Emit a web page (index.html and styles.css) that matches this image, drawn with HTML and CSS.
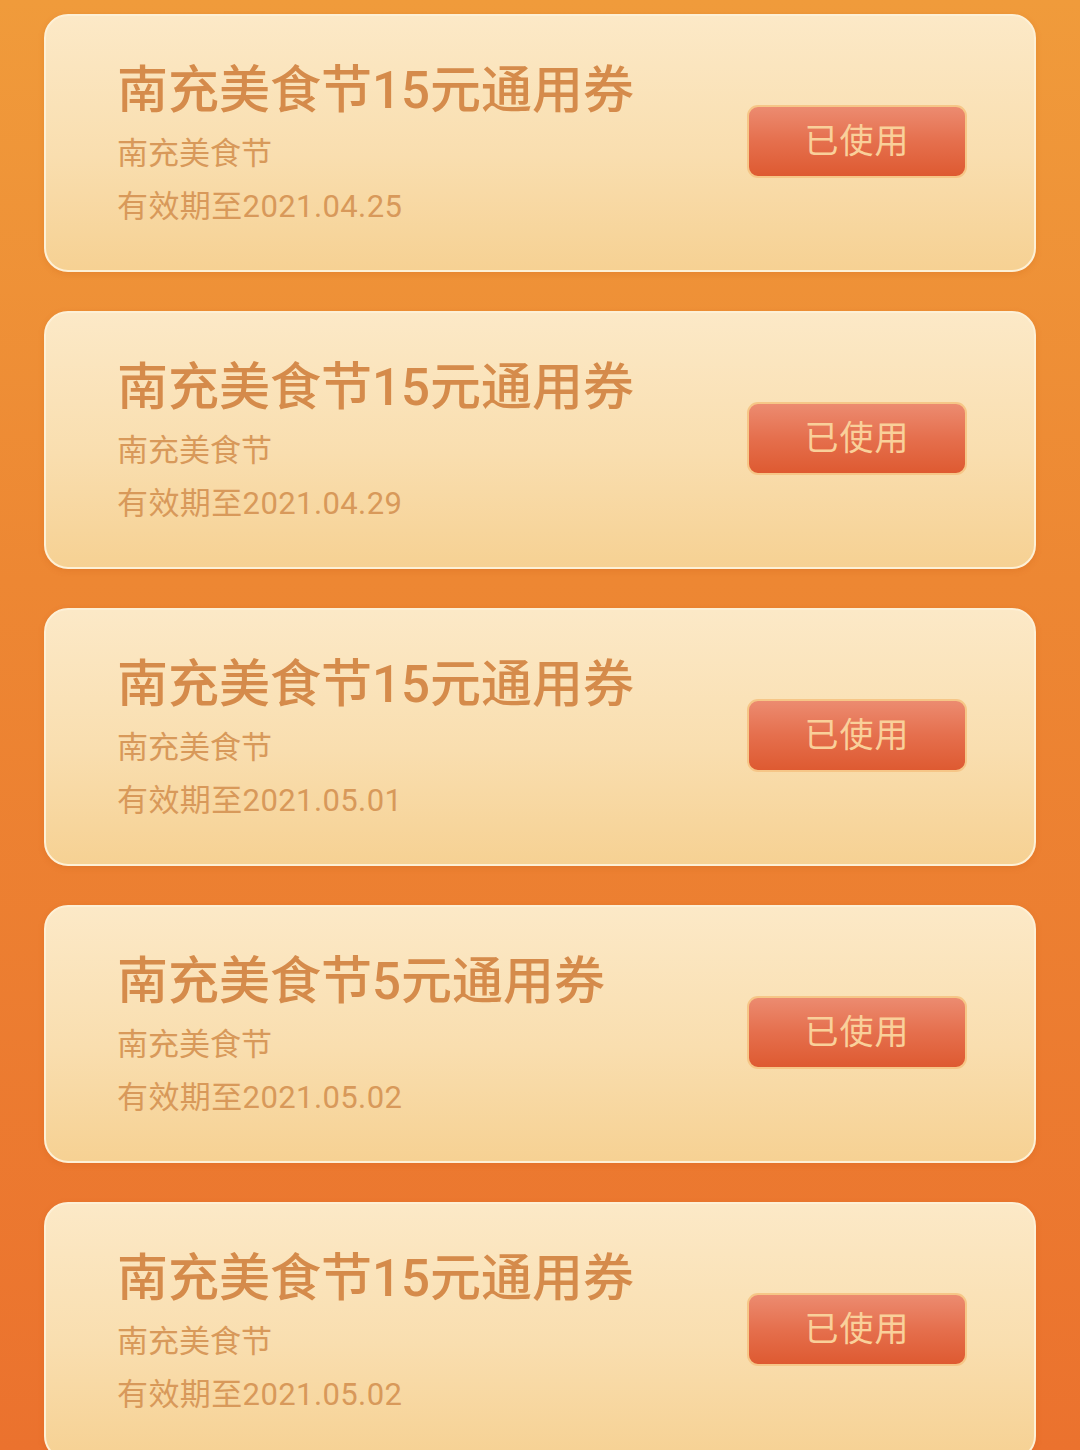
FILE: index.html
```html
<!DOCTYPE html>
<html lang="zh">
<head>
<meta charset="utf-8">
<link rel="stylesheet" href="styles.css">
</head>
<body>
<div class="list">
  <div class="card">
    <div class="info">
      <div class="title">南充美食节15元通用券</div>
      <div class="sub">南充美食节</div>
      <div class="date">有效期至2021.04.25</div>
    </div>
    <div class="btn">已使用</div>
  </div>
  <div class="card">
    <div class="info">
      <div class="title">南充美食节15元通用券</div>
      <div class="sub">南充美食节</div>
      <div class="date">有效期至2021.04.29</div>
    </div>
    <div class="btn">已使用</div>
  </div>
  <div class="card">
    <div class="info">
      <div class="title">南充美食节15元通用券</div>
      <div class="sub">南充美食节</div>
      <div class="date">有效期至2021.05.01</div>
    </div>
    <div class="btn">已使用</div>
  </div>
  <div class="card">
    <div class="info">
      <div class="title">南充美食节5元通用券</div>
      <div class="sub">南充美食节</div>
      <div class="date">有效期至2021.05.02</div>
    </div>
    <div class="btn">已使用</div>
  </div>
  <div class="card">
    <div class="info">
      <div class="title">南充美食节15元通用券</div>
      <div class="sub">南充美食节</div>
      <div class="date">有效期至2021.05.02</div>
    </div>
    <div class="btn">已使用</div>
  </div>
</div>
</body>
</html>
```

FILE: styles.css
```css
html, body {
  margin: 0;
  padding: 0;
}
body {
  width: 1080px;
  height: 1450px;
  overflow: hidden;
  background: linear-gradient(to bottom, #f09b3b 0%, #ed8733 40%, #eb722e 100%);
  font-family: Roboto, "Noto Sans CJK SC", "Noto Sans", sans-serif;
}
.list {
  display: flex;
  flex-direction: column;
  gap: 39px;
  padding: 14px 44px 0;
}
.card {
  box-sizing: border-box;
  height: 258px;
  border-radius: 24px;
  border: 2px solid #fdf0d6;
  background: linear-gradient(to bottom, #fce9c7 0%, #f9deaf 55%, #f6d193 100%);
  box-shadow: 0 2px 6px rgba(190, 80, 10, 0.18);
  display: flex;
  align-items: center;
  justify-content: space-between;
  padding: 0 67px 4px 71px;
}
.info {
  display: flex;
  flex-direction: column;
  margin-top: 6px;
}
.title {
  font-size: 51px;
  font-weight: 500;
  line-height: 64px;
  color: #d58b4b;
}
.sub {
  font-size: 31px;
  line-height: 62px;
  color: #d8995a;
}
.date {
  font-size: 31px;
  line-height: 44px;
  letter-spacing: 0.4px;
  color: #d8995a;
}
.btn {
  box-sizing: border-box;
  width: 220px;
  height: 73px;
  border-radius: 11px;
  border: 2px solid #f6c687;
  background: linear-gradient(to bottom, #ec8b70 0%, #e56f4d 50%, #de5a31 100%);
  color: #f9d09a;
  font-size: 34px;
  line-height: 69px;
  text-align: center;
  letter-spacing: 1px;
}
```
